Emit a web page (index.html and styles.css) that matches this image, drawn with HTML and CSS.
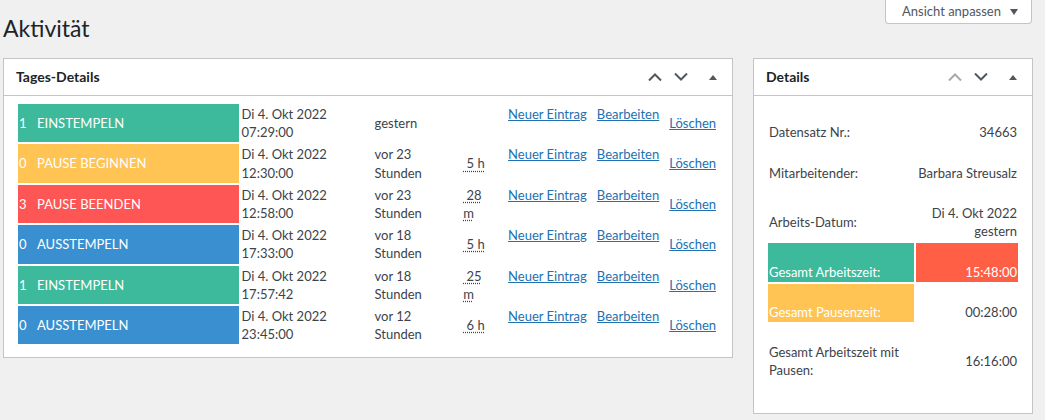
FILE: index.html
```html
<!DOCTYPE html>
<html lang="de">
<head>
<meta charset="utf-8">
<title>Aktivität</title>
<link rel="stylesheet" href="styles.css">
</head>
<body>
<div class="wrap">
  <div class="topbar">
    <h1 class="title">Aktivität</h1>
    <button class="screen-opts">Ansicht anpassen <svg class="caret" width="8" height="6" viewBox="0 0 8 6"><polygon points="0,0 8,0 4,6" fill="currentColor"/></svg></button>
  </div>
  <div class="columns">
    <section class="panel panel-main">
      <header class="panel-head">
        <h2>Tages-Details</h2>
        <div class="handles">
          <span class="hbtn"><svg width="14" height="8" viewBox="0 0 14 8"><polyline points="1,7.5 7,1.5 13,7.5" fill="none" stroke="currentColor" stroke-width="2"/></svg></span>
          <span class="hbtn"><svg width="14" height="8" viewBox="0 0 14 8"><polyline points="1,0.5 7,6.5 13,0.5" fill="none" stroke="currentColor" stroke-width="2"/></svg></span>
          <span class="hbtn toggle"><svg width="8" height="5" viewBox="0 0 8 5"><polygon points="0,5 4,0 8,5" fill="currentColor"/></svg></span>
        </div>
      </header>
      <div class="panel-body">
        <table class="entries">
          <tr>
            <td class="type green"><span class="num">1</span>EINSTEMPELN</td>
            <td class="date">Di 4. Okt 2022<br>07:29:00</td>
            <td class="rel">gestern</td>
            <td class="dur"></td>
            <td class="act"><a href="#">Neuer Eintrag</a></td>
            <td class="act"><a href="#">Bearbeiten</a></td>
            <td class="del"><a href="#">Löschen</a></td>
          </tr>
          <tr>
            <td class="type yellow"><span class="num">0</span>PAUSE BEGINNEN</td>
            <td class="date">Di 4. Okt 2022<br>12:30:00</td>
            <td class="rel">vor 23 Stunden</td>
            <td class="dur"><abbr title="5 Stunden">&nbsp;5 h</abbr></td>
            <td class="act"><a href="#">Neuer Eintrag</a></td>
            <td class="act"><a href="#">Bearbeiten</a></td>
            <td class="del"><a href="#">Löschen</a></td>
          </tr>
          <tr>
            <td class="type red"><span class="num">3</span>PAUSE BEENDEN</td>
            <td class="date">Di 4. Okt 2022<br>12:58:00</td>
            <td class="rel">vor 23 Stunden</td>
            <td class="dur"><abbr title="28 Minuten">&nbsp;28 m</abbr></td>
            <td class="act"><a href="#">Neuer Eintrag</a></td>
            <td class="act"><a href="#">Bearbeiten</a></td>
            <td class="del"><a href="#">Löschen</a></td>
          </tr>
          <tr>
            <td class="type blue"><span class="num">0</span>AUSSTEMPELN</td>
            <td class="date">Di 4. Okt 2022<br>17:33:00</td>
            <td class="rel">vor 18 Stunden</td>
            <td class="dur"><abbr title="5 Stunden">&nbsp;5 h</abbr></td>
            <td class="act"><a href="#">Neuer Eintrag</a></td>
            <td class="act"><a href="#">Bearbeiten</a></td>
            <td class="del"><a href="#">Löschen</a></td>
          </tr>
          <tr>
            <td class="type green"><span class="num">1</span>EINSTEMPELN</td>
            <td class="date">Di 4. Okt 2022<br>17:57:42</td>
            <td class="rel">vor 18 Stunden</td>
            <td class="dur"><abbr title="25 Minuten">&nbsp;25 m</abbr></td>
            <td class="act"><a href="#">Neuer Eintrag</a></td>
            <td class="act"><a href="#">Bearbeiten</a></td>
            <td class="del"><a href="#">Löschen</a></td>
          </tr>
          <tr>
            <td class="type blue"><span class="num">0</span>AUSSTEMPELN</td>
            <td class="date">Di 4. Okt 2022<br>23:45:00</td>
            <td class="rel">vor 12 Stunden</td>
            <td class="dur"><abbr title="6 Stunden">&nbsp;6 h</abbr></td>
            <td class="act"><a href="#">Neuer Eintrag</a></td>
            <td class="act"><a href="#">Bearbeiten</a></td>
            <td class="del"><a href="#">Löschen</a></td>
          </tr>
        </table>
      </div>
    </section>

    <section class="panel panel-side">
      <header class="panel-head">
        <h2>Details</h2>
        <div class="handles">
          <span class="hbtn disabled"><svg width="14" height="8" viewBox="0 0 14 8"><polyline points="1,7.5 7,1.5 13,7.5" fill="none" stroke="currentColor" stroke-width="2"/></svg></span>
          <span class="hbtn"><svg width="14" height="8" viewBox="0 0 14 8"><polyline points="1,0.5 7,6.5 13,0.5" fill="none" stroke="currentColor" stroke-width="2"/></svg></span>
          <span class="hbtn toggle"><svg width="8" height="5" viewBox="0 0 8 5"><polygon points="0,5 4,0 8,5" fill="currentColor"/></svg></span>
        </div>
      </header>
      <div class="panel-body side-body">
        <table class="details">
          <tr>
            <td class="lbl">Datensatz Nr.:</td>
            <td class="val">34663</td>
          </tr>
          <tr>
            <td class="lbl">Mitarbeitender:</td>
            <td class="val">Barbara Streusalz</td>
          </tr>
          <tr>
            <td class="lbl">Arbeits-Datum:</td>
            <td class="val">Di 4. Okt 2022<br>gestern</td>
          </tr>
          <tr>
            <td class="lbl green">Gesamt Arbeitszeit:</td>
            <td class="val tomato">15:48:00</td>
          </tr>
          <tr>
            <td class="lbl yellow">Gesamt Pausenzeit:</td>
            <td class="val">00:28:00</td>
          </tr>
          <tr>
            <td class="lbl">Gesamt Arbeitszeit mit Pausen:</td>
            <td class="val">16:16:00</td>
          </tr>
        </table>
      </div>
    </section>
  </div>
</div>
</body>
</html>
```

FILE: styles.css
```css
html, body {
  margin: 0;
  padding: 0;
}

body {
  background: #f0f0f1;
  color: #3c434a;
  font-family: Lato, "Liberation Sans", "Noto Sans", sans-serif;
  font-size: 13px;
  line-height: 1.4;
}

.wrap {
  padding: 0 12px 0 3px;
}

.topbar {
  display: flex;
  justify-content: space-between;
  align-items: flex-start;
}

.title {
  margin: 13px 0 0 0;
  font-size: 23px;
  font-weight: 400;
  line-height: 30px;
  color: #1d2327;
}

.screen-opts {
  display: flex;
  align-items: center;
  margin-right: 1px;
  width: 147px;
  height: 24px;
  padding: 0 0 1px 16px;
  background: #fff;
  border: 1px solid #c3c4c7;
  border-top: none;
  border-radius: 0 0 4px 4px;
  color: #50575e;
  font-family: inherit;
  font-size: 13px;
  line-height: 22px;
}

.screen-opts .caret {
  margin-left: 9px;
  margin-top: 1px;
}

.columns {
  display: flex;
  align-items: flex-start;
  gap: 20px;
  margin-top: 15px;
}

.panel {
  background: #fff;
  border: 1px solid #c3c4c7;
}

.panel-main {
  flex: 1;
}

.panel-side {
  width: 280px;
  box-sizing: border-box;
}

.panel-head {
  display: flex;
  align-items: center;
  justify-content: space-between;
  height: 36px;
  padding-left: 12px;
  border-bottom: 1px solid #c3c4c7;
}

.panel-head h2 {
  margin: 0;
  font-size: 14px;
  font-weight: 700;
  color: #1d2327;
}

.handles {
  display: flex;
  height: 100%;
  align-items: center;
}

.hbtn {
  display: flex;
  width: 26px;
  height: 100%;
  align-items: center;
  justify-content: center;
  color: #50575e;
}

.hbtn.disabled {
  color: #a7aaad;
}

.hbtn.toggle {
  width: 38px;
}

.panel-body {
  padding: 6px 12px 11px;
}

.side-body {
  padding-bottom: 30px;
}

table {
  border-collapse: separate;
  border-spacing: 2px;
}

td {
  padding: 1px;
  line-height: 1.4;
  vertical-align: middle;
}

.entries .type {
  width: 221px;
  color: #fff;
  white-space: nowrap;
}

.num {
  display: inline-block;
  width: 18px;
}

.green { background: #3dba9b; color: #fff; }
.yellow { background: #ffc453; color: #fff; }
.red { background: #fe5555; color: #fff; }
.blue { background: #3a8fd0; color: #fff; }
.tomato { background: #ff5f45; color: #fff; }

.entries .date {
  width: 131px;
}

.entries .rel {
  width: 60px;
  padding-right: 26px;
}

.entries .dur {
  width: 24px;
  padding-right: 18px;
}

abbr {
  text-decoration: underline dotted;
  text-underline-offset: 2px;
}

.entries .act {
  vertical-align: top;
  padding-right: 7px;
  white-space: nowrap;
}

.entries .del {
  padding-right: 2px;
}

a {
  color: #2271b1;
  text-decoration: underline;
}

.details {
  width: 100%;
  table-layout: fixed;
}

.details td {
  padding-top: calc(1.4em + 1px);
}

.details .lbl {
  width: 144px;
}

.details .val {
  text-align: right;
}
```
